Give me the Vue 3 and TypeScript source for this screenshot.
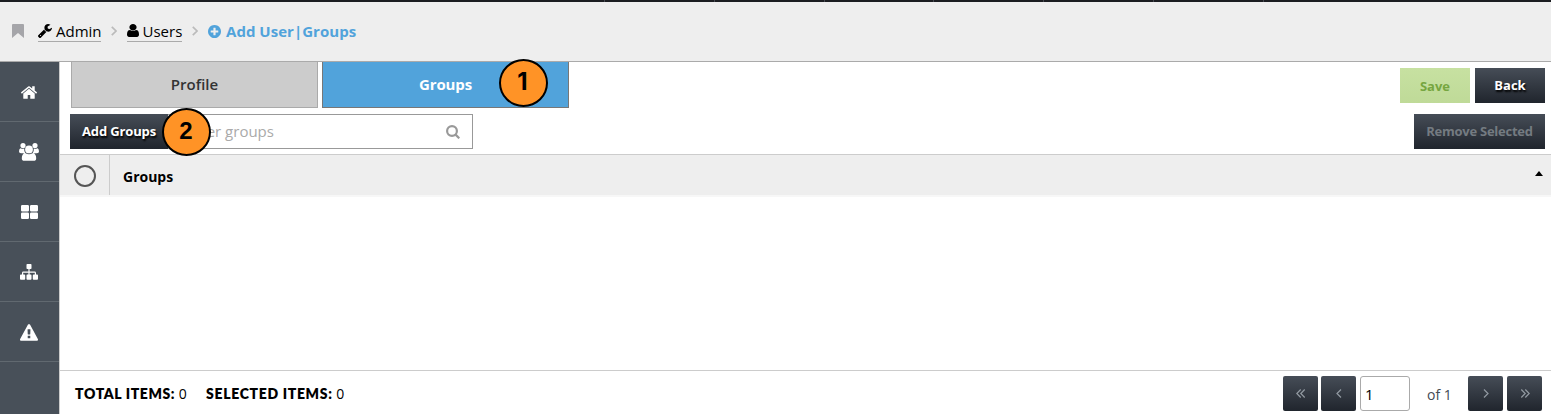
<script setup lang="ts">
import { ref } from 'vue'

interface Icon { box: string; w: number; h: number; d: string }

const icons: Record<string, Icon> = {
  home: { box: '90 253 1612 1283', w: 16, h: 13, d: 'M1472 992v480q0 26-19 45t-45 19h-384v-384h-256v384h-384q-26 0-45-19t-19-45v-480q0-1 .5-3t.5-3l575-474 575 474q1 2 1 6zm223-69l-62 74q-8 9-21 11h-3q-13 0-21-7l-692-577-692 577q-12 8-24 7-13-2-21-11l-62-74q-8-10-7-23.5t11-21.5l719-599q32-26 76-26t76 26l244 204v-195q0-14 9-23t23-9h192q14 0 23 9t9 23v408l219 182q10 8 11 21.5t-7 23.5z' },
  users: { box: '0 0 20 18', w: 20, h: 18, d: 'M4 0a2.600 2.600 0 1 1 0 5.200A2.600 2.600 0 0 1 4 0M16 0a2.600 2.600 0 1 1 0 5.200A2.600 2.600 0 0 1 16 0M10 2.500a3.900 3.900 0 1 1 0 7.800 3.900 3.900 0 0 1 0-7.800M1.300 5.200Q4 6.600 5.200 5.600q-.3 3 1.200 4.600H2Q0 10.200 0 8.400 0 6 1.300 5.200M18.700 5.200Q16 6.600 14.800 5.600q.3 3-1.200 4.600H18q2 0 2-1.800 0-2.400-1.300-3.200M6.200 9.900q3.800 2.800 7.600 0Q17.200 10.500 17.200 15.200q0 2.600-2.600 2.600H5.400q-2.600 0-2.600-2.600Q2.800 10.500 6.200 9.900z' },
  grid: { box: '0 0 17 14', w: 17, h: 14, d: 'M1.300 0h5.400q1.300 0 1.300 1.300v3.900q0 1.300-1.300 1.300H1.300Q0 6.500 0 5.200V1.300Q0 0 1.300 0zM10.300 0h5.400q1.300 0 1.300 1.300v3.900q0 1.300-1.300 1.300h-5.400Q9 6.500 9 5.200V1.300Q9 0 10.300 0zM1.300 7.500h5.400Q8 7.500 8 8.800v3.900q0 1.300-1.300 1.300H1.300Q0 14 0 12.700V8.800q0-1.300 1.300-1.300zM10.300 7.500h5.400q1.300 0 1.300 1.300v3.900q0 1.300-1.300 1.300h-5.400Q9 14 9 12.700V8.800q0-1.300 1.300-1.300z' },
  tree: { box: '0 0 18 16', w: 18, h: 16, d: 'M7.300 0h3.400q.8 0 .8.800v3.400q0 .8-.8.800h-1.100v2.500h5q1.400 0 1.400 1.400v1.600h1.100q.9 0 .9.900v3.400q0 .9-.9.900h-3.400q-.9 0-.9-.9v-3.400q0-.9.900-.9h1.100V8.700H9.600v1.800h1.100q.8 0 .8.900v3.400q0 .9-.8.900H7.300q-.8 0-.8-.9v-3.400q0-.9.8-.9h1.100V8.700H3.200v1.800h1.100q.9 0 .9.900v3.400q0 .9-.9.900H.9q-.9 0-.9-.9v-3.400q0-.9.900-.9H2V8.900q0-1.400 1.400-1.400h5V5H7.300q-.8 0-.8-.8V.8q0-.8.8-.8z' },
  alert: { box: '0 0 1792 1664', w: 18, h: 17, d: 'M1024 1375v-190q0-14-9.500-23.500t-22.500-9.500h-192q-13 0-22.500 9.500t-9.500 23.500v190q0 14 9.500 23.500t22.500 9.500h192q13 0 22.500-9.500t9.500-23.500zm-2-374l18-459q0-12-10-19-13-11-24-11h-220q-11 0-24 11-10 7-10 21l17 457q0 10 10 16.500t24 6.500h185q14 0 23.500-6.500t10.500-16.500zm-14-934l768 1408q35 63-2 126-17 29-46.500 46t-63.500 17h-1536q-34 0-63.500-17t-46.500-46q-37-63-2-126l768-1408q17-31 47-49t65-18 65 18 47 49z' },
}

const sideItems = ['home', 'users', 'grid', 'tree', 'alert'].map((name) => ({ name, ...icons[name] }))
const ticks = [1, 2, 3, 4, 5, 6, 7]
const filter = ref('')
const page = ref('1')
</script>

<template>
  <div class="app">
    <div class="topbar"><i v-for="t in ticks" :key="t"></i></div>
    <header class="crumbs">
      <svg class="bookmark" width="12" height="14" viewBox="0 0 12 14"><path d="M1 0h10q1 0 1 1v13L6 9l-6 5V1q0-1 1-1z" /></svg>
      <a class="crumb admin">
        <svg width="14" height="14" viewBox="85 128 1642 1643"><path d="M448 1472q0-26-19-45t-45-19-45 19-19 45 19 45 45 19 45-19 19-45zm644-420l-682 682q-37 37-90 37-52 0-91-37l-106-108q-38-36-38-90 0-53 38-91l681-681q39 98 114.500 173.500t173.500 114.500zm634-435q0 39-23 106-47 134-164.500 217.500t-258.500 83.500q-185 0-316.500-131.500t-131.500-316.500 131.500-316.500 316.500-131.500q58 0 121.500 16.500t107.500 46.500q16 11 16 28t-16 28l-293 169v224l193 107q5-3 79-48.500t135.500-81 70.500-35.500q15 0 23.500 10t8.500 25z" /></svg>
        <span>Admin</span>
      </a>
      <svg class="sep" width="6" height="10" viewBox="0 0 6 10"><path d="M.8.8 5 5 .8 9.200" /></svg>
      <a class="crumb users">
        <svg width="12" height="13" viewBox="256 128 1280 1536" preserveAspectRatio="none"><path d="M1536 1399q0 109-62.500 187t-150.500 78h-854q-88 0-150.500-78t-62.500-187q0-85 8.500-160.500t31.500-152 58.500-131 94-89 134.500-34.500q131 128 313 128t313-128q76 0 134.500 34.500t94 89 58.500 131 31.500 152 8.500 160.500zm-256-887q0 159-112.500 271.500t-271.500 112.500-271.500-112.500-112.500-271.500 112.500-271.500 271.500-112.500 271.500 112.500 112.500 271.500z" /></svg>
        <span>Users</span>
      </a>
      <svg class="sep" width="6" height="10" viewBox="0 0 6 10"><path d="M.8.8 5 5 .8 9.200" /></svg>
      <span class="current">
        <svg width="13" height="13" viewBox="128 128 1536 1536"><path d="M1344 960v-128q0-26-19-45t-45-19h-256v-256q0-26-19-45t-45-19h-128q-26 0-45 19t-19 45v256h-256q-26 0-45 19t-19 45v128q0 26 19 45t45 19h256v256q0 26 19 45t45 19h128q26 0 45-19t19-45v-256h256q26 0 45-19t19-45zm320-64q0 209-103 385.500t-279.500 279.500-385.500 103-385.500-103-279.500-279.500-103-385.500 103-385.500 279.500-279.500 385.500-103 385.500 103 279.500 279.500 103 385.500z" /></svg>
        <span>Add User|Groups</span>
      </span>
    </header>
    <div class="body">
      <nav class="side">
        <a v-for="item in sideItems" :key="item.name">
          <svg :width="item.w" :height="item.h" :viewBox="item.box"><path :d="item.d" /></svg>
        </a>
      </nav>
      <main>
        <div class="tabs">
          <button class="tab">Profile</button>
          <button class="tab active">Groups<span class="marker one">1</span></button>
          <div class="actions">
            <button class="btn save">Save</button>
            <button class="btn back">Back</button>
          </div>
        </div>
        <div class="tools">
          <button class="btn add">Add Groups<span class="marker two">2</span></button>
          <div class="search">
            <input v-model="filter" placeholder="Filter groups" />
            <svg width="14" height="14" viewBox="0 0 14 14"><circle cx="6" cy="6" r="4.900" /><path d="m9.600 9.600 3.700 3.700" /></svg>
          </div>
          <button class="btn remove">Remove Selected</button>
        </div>
        <div class="thead">
          <div class="check"><i></i></div>
          <div class="name">Groups</div>
          <svg width="8" height="5" viewBox="0 0 8 5"><path d="M4 0 8 5H0z" /></svg>
        </div>
        <div class="rows"></div>
        <footer>
          <span class="stat total"><b>TOTAL ITEMS:</b> 0</span>
          <span class="stat selected"><b>SELECTED ITEMS:</b> 0</span>
          <div class="pager">
            <button><svg width="10" height="9" viewBox="0 0 10 9"><path d="M4.700.5.800 4.500l3.900 4M8.700.5l-3.900 4 3.900 4" /></svg></button>
            <button><svg width="6" height="9" viewBox="0 0 6 9"><path d="M5 .5 1 4.500l4 4" /></svg></button>
            <input v-model="page" />
            <span>of 1</span>
            <button><svg width="6" height="9" viewBox="0 0 6 9"><path d="m1 .5 4 4-4 4" /></svg></button>
            <button><svg width="10" height="9" viewBox="0 0 10 9"><path d="m1.300.5 3.900 4-3.900 4M5.300.5l3.900 4-3.900 4" /></svg></button>
          </div>
        </footer>
      </main>
    </div>
  </div>
</template>

<style>
body { margin: 0; overflow: hidden; }
</style>

<style scoped>
* { box-sizing: border-box; }
.app { height: 414px; font: 15px/20px "Open Sans", "Noto Sans", sans-serif; color: #000; background: #fff; }
button, input { font: inherit; margin: 0; padding: 0; border: 0; border-radius: 0; }
svg { display: block; flex: none; }
.topbar { height: 2px; background: #1b1d21; display: flex; gap: 108.800px; padding-left: 604px; }
.topbar i { width: 1px; height: 2px; background: #45484e; }
.crumbs { height: 60px; background: #eee; border-bottom: 1px solid #aaa; display: flex; align-items: center; padding: 0 0 1px 12px; }
.bookmark { fill: #a5a5a9; width: 12px; }
.crumb { display: flex; align-items: center; height: 21px; border-bottom: 1px solid #aaa; }
.admin { margin-left: 14px; width: 63px; gap: 4px; }
.users { width: 55px; gap: 3.500px; }
.sep { fill: none; stroke: #bbb; stroke-width: 1.700; margin: 0 10px; }
.current { display: flex; align-items: center; gap: 5px; color: #51a3db; font-weight: 700; letter-spacing: .03px; }
.current svg { fill: #51a3db; }
.body { display: flex; height: 352px; }
.side { width: 59px; background: #485059; flex: none; }
.side a { height: 60px; border-bottom: 1px solid #616970; display: flex; align-items: center; justify-content: center; padding: 1px 1px 0 0; }
.side svg { fill: #fff; }
main { flex: 1; display: flex; flex-direction: column; border-left: 1px solid #ccc; min-width: 0; }
.tabs { height: 46px; display: flex; gap: 4px; padding: 0 6px 0 11px; }
.tab { width: 247px; height: 46px; border: 1px solid #aaa; border-top: 0; background: #ccc; color: #333; font-weight: 600; position: relative; padding-bottom: 2px; }
.tab.active { background: #51a3db; border-color: #777; color: #fff; font-weight: 700; letter-spacing: -.1px; }
.marker { position: absolute; width: 49px; height: 48px; border: 2px solid #000; border-radius: 50%; background: #ff9326; color: #000; font: 700 24px/42px "Liberation Sans", Arial, sans-serif; letter-spacing: 0; text-align: center; text-shadow: none; z-index: 2; }
.one { left: 176px; top: -3px; font-family: Inter, sans-serif; padding-right: 2px; }
.two { left: 92px; top: -6px; padding-right: 1px; line-height: 41px; }
.actions { margin-left: auto; display: flex; gap: 5px; padding-top: 6px; }
.btn { height: 35px; background: linear-gradient(#464d57, #20252d); color: #fff; font-weight: 700; font-size: 13px; text-shadow: 1px 2px 2px #000; position: relative; padding-bottom: 2px; }
.save { width: 70px; background: linear-gradient(#c7e1a1, #bfda98); color: #76a640; text-shadow: none; padding: 0; }
.back { width: 70px; }
.tools { height: 46px; display: flex; padding: 6px 6px 0 10px; }
.add { width: 98px; letter-spacing: -.15px; }
.search { width: 305px; height: 35px; border: 1px solid #999; border-left: 0; display: flex; align-items: center; padding: 0 12px 0 18px; }
.search input { flex: 1; min-width: 0; outline: 0; background: none; padding-bottom: 2px; }
.search input::placeholder { color: #aaa; opacity: 1; }
.search svg { fill: none; stroke: #999; stroke-width: 2.200; }
.remove { width: 131px; margin-left: auto; color: #747b81; text-shadow: none; letter-spacing: -.25px; }
.thead { height: 43px; background: #eee; border-top: 1px solid #ccc; border-bottom: 2px solid #f7f7f7; display: flex; }
.check { width: 50px; border-right: 1px solid #ccc; display: flex; justify-content: center; align-items: center; }
.check i { width: 22px; height: 22px; border: 2px solid #555; border-radius: 50%; margin-top: 1px; }
.name { font-weight: 700; font-size: 14px; line-height: 43px; padding-left: 13px; }
.thead svg { margin: 16px 8px 0 auto; }
.rows { flex: 1; }
footer { height: 44px; border-top: 1px solid #ccc; display: flex; padding-left: 15px; }
.stat { line-height: 46px; font-size: 14px; white-space: nowrap; }
.stat b { font: 800 14px/46px Lato, sans-serif; letter-spacing: .6px; }
.total { width: 131px; }
.selected b { letter-spacing: .68px; }
.pager { margin: 5px 9px 0 auto; display: flex; }
.pager button { width: 35px; height: 35px; border-radius: 2px; background: linear-gradient(#464d57, #20252d); display: flex; align-items: center; justify-content: center; margin-right: 4px; }
.pager button:first-child { margin-right: 3px; }
.pager button:last-child { margin-right: 0; }
.pager svg { fill: none; stroke: #929aa2; stroke-width: 1.200; }
.pager input { width: 50px; height: 35px; border: 1px solid #aaa; border-radius: 3px; padding: 1px 4px 0; font-size: 15px; }
.pager span { width: 58px; padding-left: 17px; line-height: 38px; font-size: 14px; color: #444b54; }
</style>
